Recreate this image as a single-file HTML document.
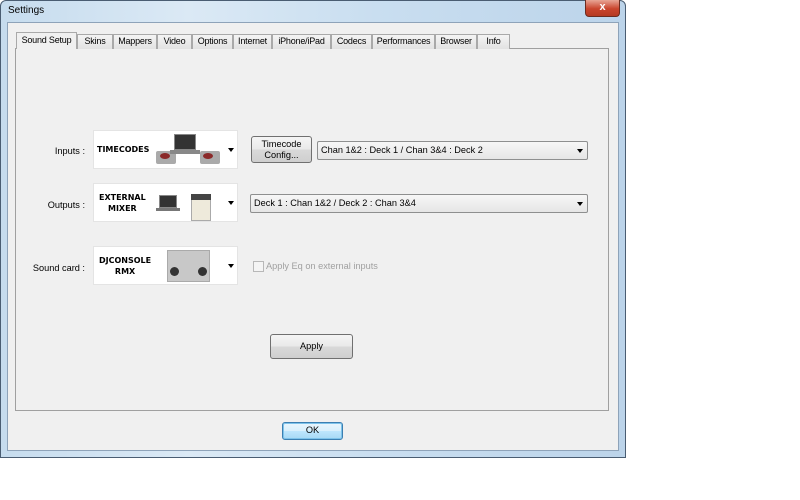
<!DOCTYPE html>
<html><head><style>
*{box-sizing:border-box;margin:0;padding:0}
body{width:800px;height:500px;background:#fff;position:relative;overflow:hidden;font-family:"Liberation Sans",sans-serif;font-size:9.2px;color:#000}
.a{position:absolute}
#win{left:0;top:0;width:626px;height:458px;background:linear-gradient(90deg,#c6dcee 0%,#dbe9f5 30%,#c9def0 60%,#bcd4ea 100%);border:1px solid #4a5d72;border-radius:6px 6px 0 0}
#client{left:7px;top:22px;width:612px;height:429px;background:#f0f0f0;border:1px solid #8ea3b9}
#panel{left:15px;top:48px;width:594px;height:363px;background:#f0f0f0;border:1px solid #a0a0a0}
.tab{position:absolute;top:34px;height:15px;border:1px solid #a9a9a9;border-bottom:none;background:linear-gradient(#f4f4f4,#e2e2e2);text-align:center;line-height:13px;font-size:9px;white-space:nowrap;overflow:hidden;letter-spacing:-0.2px}
.tab.sel{top:32px;height:17px;background:#f0f0f0;line-height:15px;z-index:2}
.img{background:#fff;border:1px solid #e4e4e4;width:145px;height:39px}
.lbl{font-size:9.2px;text-align:right}
.combo{background:linear-gradient(#f7f7f7,#e6e6e6);border:1px solid #8e8f8f;border-radius:2px;height:19px;line-height:17px;padding-left:3px;font-size:9.2px}
.arr{position:absolute;right:4px;top:7px;width:0;height:0;border-left:3.5px solid transparent;border-right:3.5px solid transparent;border-top:4px solid #000}
.btn{background:linear-gradient(#f5f5f5 0%,#e9e9e9 50%,#d9d9d9 51%,#cfcfcf 100%);border:1px solid #707070;border-radius:3px;text-align:center;font-size:9.2px}
.bt{font-weight:bold;font-size:8px;font-family:"DejaVu Sans",sans-serif;text-align:center;line-height:11px}
</style></head><body>
<div class="a" id="win"></div>
<div class="a" style="left:8px;top:5px;font-size:10px">Settings</div>
<div class="a" style="left:585px;top:0;width:35px;height:17px;background:linear-gradient(#e8a595,#c9452d 55%,#b53a22);border:1px solid #6b2c20;border-top:none;border-radius:0 0 4px 4px;color:#fff;text-align:center;font-weight:bold;font-size:11px;line-height:15px">x</div>
<div class="a" id="client"></div>
<div class="a" id="panel"></div>
<div class="tab sel" style="left:16px;width:61px">Sound Setup</div>
<div class="tab" style="left:77px;width:36px">Skins</div>
<div class="tab" style="left:113px;width:44px">Mappers</div>
<div class="tab" style="left:157px;width:35px">Video</div>
<div class="tab" style="left:192px;width:41px">Options</div>
<div class="tab" style="left:233px;width:39px">Internet</div>
<div class="tab" style="left:272px;width:59px">iPhone/iPad</div>
<div class="tab" style="left:331px;width:41px">Codecs</div>
<div class="tab" style="left:372px;width:63px">Performances</div>
<div class="tab" style="left:435px;width:42px">Browser</div>
<div class="tab" style="left:477px;width:33px">Info</div>

<div class="a lbl" style="left:30px;top:146px;width:55px">Inputs :</div>
<div class="a lbl" style="left:30px;top:200px;width:55px">Outputs :</div>
<div class="a lbl" style="left:20px;top:263px;width:65px">Sound card :</div>

<div class="a img" style="left:93px;top:130px">
 <div class="a bt" style="left:3px;top:13px">TIMECODES</div>
 <div class="a" style="left:62px;top:20px;width:20px;height:13px;background:#aaa;border-radius:2px"></div><div class="a" style="left:66px;top:22px;width:10px;height:6px;background:#8b2a2a;border-radius:50%"></div>
 <div class="a" style="left:80px;top:3px;width:22px;height:16px;background:#333;border:1px solid #888"></div>
 <div class="a" style="left:76px;top:19px;width:30px;height:4px;background:#888"></div>
 <div class="a" style="left:106px;top:20px;width:20px;height:13px;background:#aaa;border-radius:2px"></div><div class="a" style="left:109px;top:22px;width:10px;height:6px;background:#8b2a2a;border-radius:50%"></div>
 <div class="arr" style="right:3px;top:17px"></div>
</div>
<div class="a img" style="left:93px;top:183px">
 <div class="a bt" style="left:5px;top:8px">EXTERNAL<br>MIXER</div>
 <div class="a" style="left:65px;top:11px;width:18px;height:13px;background:#333;border:1px solid #888"></div>
 <div class="a" style="left:62px;top:24px;width:24px;height:3px;background:#777"></div>
 <div class="a" style="left:97px;top:10px;width:20px;height:27px;background:#eeeadb;border:1px solid #aaa"></div>
 <div class="a" style="left:97px;top:10px;width:20px;height:6px;background:#444"></div>
 <div class="arr" style="right:3px;top:17px"></div>
</div>
<div class="a img" style="left:93px;top:246px">
 <div class="a bt" style="left:5px;top:8px">DJCONSOLE<br>RMX</div>
 <div class="a" style="left:73px;top:3px;width:43px;height:32px;background:#c8c8c8;border:1px solid #aaa"></div>
 <div class="a" style="left:76px;top:20px;width:9px;height:9px;background:#333;border-radius:50%"></div>
 <div class="a" style="left:104px;top:20px;width:9px;height:9px;background:#333;border-radius:50%"></div>
 <div class="arr" style="right:3px;top:17px"></div>
</div>

<div class="a btn" style="left:251px;top:136px;width:61px;height:27px;line-height:11px;padding-top:2px">Timecode<br>Config...</div>
<div class="a combo" style="left:317px;top:141px;width:271px">Chan 1&amp;2 : Deck 1 / Chan 3&amp;4 : Deck 2<div class="arr"></div></div>
<div class="a combo" style="left:250px;top:194px;width:338px">Deck 1 : Chan 1&amp;2 / Deck 2 : Chan 3&amp;4<div class="arr"></div></div>
<div class="a" style="left:253px;top:261px;width:11px;height:11px;border:1px solid #b8b8b8;background:#f4f4f4"></div>
<div class="a" style="left:266px;top:261px;color:#a0a0a0">Apply Eq on external inputs</div>

<div class="a btn" style="left:270px;top:334px;width:83px;height:25px;line-height:23px">Apply</div>
<div class="a btn" style="left:282px;top:422px;width:61px;height:18px;line-height:15px;border:1px solid #3c7fb1;background:linear-gradient(#eaf6fd,#d9f0fc 50%,#bee6fd 51%,#a7d9f5);box-shadow:inset 0 0 0 1px #7ec3ea">OK</div>
</body></html>
